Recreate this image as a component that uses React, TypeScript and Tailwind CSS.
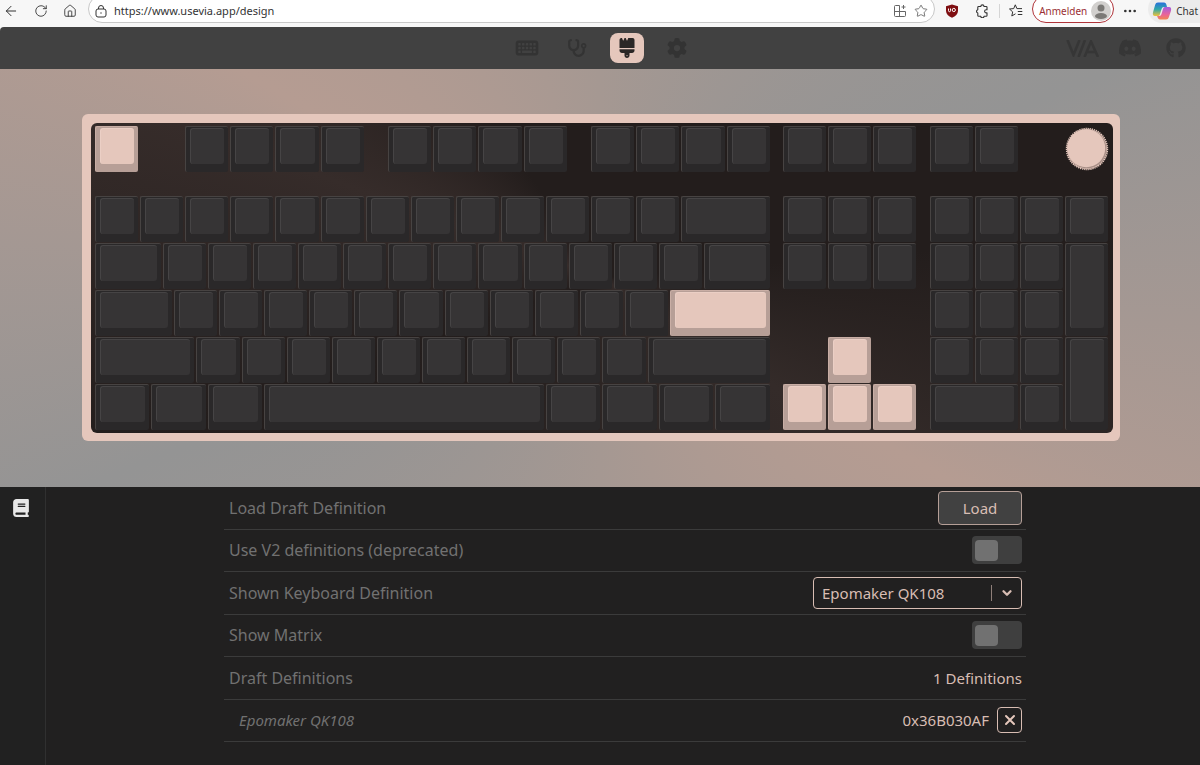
import React, { useState } from 'react';
import { ArrowLeft, RotateCw, House, Star, Ellipsis, ChevronDown } from 'lucide-react';
import { FaKeyboard, FaStethoscope, FaBrush, FaGear, FaDiscord, FaGithub, FaBook } from 'react-icons/fa6';

interface KeyConfig {
  x: number;
  row: number;
  w?: number;
  h?: number;
  accent?: boolean;
}

const run = (row: number, x: number, count: number, w = 1): KeyConfig[] =>
  Array.from({ length: count }, (_, i) => ({ row, x: x + i * w, w }));

// Positions are in key units, row 2 is the half-height gap below the function row
const KEYS: KeyConfig[] = [
  { row: 1, x: 0, accent: true },
  ...run(1, 2, 4),
  ...run(1, 6.5, 4),
  ...run(1, 11, 4),
  ...run(1, 15.25, 3),
  ...run(1, 18.5, 2),

  ...run(3, 0, 13),
  { row: 3, x: 13, w: 2 },
  ...run(3, 15.25, 3),
  ...run(3, 18.5, 4),

  { row: 4, x: 0, w: 1.5 },
  ...run(4, 1.5, 12),
  { row: 4, x: 13.5, w: 1.5 },
  ...run(4, 15.25, 3),
  ...run(4, 18.5, 3),
  { row: 4, x: 21.5, h: 2 },

  { row: 5, x: 0, w: 1.75 },
  ...run(5, 1.75, 11),
  { row: 5, x: 12.75, w: 2.25, accent: true },
  ...run(5, 18.5, 3),

  { row: 6, x: 0, w: 2.25 },
  ...run(6, 2.25, 10),
  { row: 6, x: 12.25, w: 2.75 },
  { row: 6, x: 16.25, accent: true },
  ...run(6, 18.5, 3),
  { row: 6, x: 21.5, h: 2 },

  ...run(7, 0, 3, 1.25),
  { row: 7, x: 3.75, w: 6.25 },
  ...run(7, 10, 4, 1.25),
  { row: 7, x: 15.25, accent: true },
  { row: 7, x: 16.25, accent: true },
  { row: 7, x: 17.25, accent: true },
  { row: 7, x: 18.5, w: 2 },
  { row: 7, x: 20.5 }
];

const gridPlace = ({ x, row, w = 1, h = 1 }: KeyConfig) => ({
  gridColumn: `${x * 4 + 1} / span ${w * 4}`,
  gridRow: `${row} / span ${h}`
});

function Key({ config }: { config: KeyConfig }) {
  return (
    <div className="flex pr-0.5 pb-px" style={gridPlace(config)}>
      <div
        className={`flex flex-1 rounded-xs border-t border-l px-1 pt-px pb-2 ${
          config.accent ? 'border-[#c9aea5] bg-[#b79f97]' : 'border-[#474342] bg-[#2a2829]'
        }`}
      >
        <div
          className={`flex-1 rounded-[3px] border-t border-l ${
            config.accent ? 'border-[#ebcfc5] bg-[#e5c7bc]' : 'border-[#464445] bg-[#363435]'
          }`}
        />
      </div>
    </div>
  );
}

function Knob() {
  return (
    <div className="flex items-center justify-center pb-px" style={gridPlace({ row: 1, x: 21.5 })}>
      <svg viewBox="0 0 44 44" className="h-11 w-11 shrink-0">
        <circle cx="22" cy="22" r="20" fill="#e5c7bc" />
        <circle cx="22" cy="22" r="20.5" fill="none" stroke="#e5c7bc" strokeWidth="1.400" strokeDasharray="1.300 0.800" />
        <circle cx="22" cy="22" r="19.5" fill="#a88f87" />
        <circle cx="21.2" cy="21.2" r="19" fill="#e5c7bc" />
      </svg>
    </div>
  );
}

function LockIcon() {
  return (
    <svg viewBox="0 0 12 13" className="h-[13px] w-3" fill="none" stroke="currentColor">
      <rect x="1" y="4" width="10" height="8" rx="2" />
      <path d="M3.500 4V3a2.500 2.500 0 0 1 5 0v1" />
      <circle cx="6" cy="8" r="0.700" fill="currentColor" stroke="none" />
    </svg>
  );
}

function AppsIcon() {
  return (
    <svg viewBox="0 0 14 14" className="h-3.5 w-3.5" fill="none" stroke="currentColor">
      <path d="M6.500 1.500h-4a1 1 0 0 0-1 1v9a1 1 0 0 0 1 1h9a1 1 0 0 0 1-1V7.500h-11M6.500 1.500v11M10.500 1v4M8.500 3h4" />
    </svg>
  );
}

function ShieldIcon() {
  return (
    <svg viewBox="0 0 14 14" className="h-3.5 w-3.5">
      <path d="M7 0.500 13 2.200V7c0 3-2.500 5.300-6 6.800C3.500 12.300 1 10 1 7V2.200z" fill="#7f0f12" />
      <path d="M3.500 4.500v2.200a1 1 0 0 0 2 0V4.500" fill="none" stroke="#fff" />
      <circle cx="8.800" cy="6" r="1.600" fill="none" stroke="#fff" />
    </svg>
  );
}

function ExtensionsIcon() {
  return (
    <svg viewBox="0 0 14 14" className="h-3.5 w-3.5" fill="none" stroke="currentColor" strokeWidth="1.100" strokeLinejoin="round">
      <path d="M5.800 2.500a1.600 1.600 0 0 1 3.200 0h2.200a.8.8 0 0 1 .8.800v2.400h-.8a1.600 1.600 0 0 0 0 3.200h.8v2.600a.8.800 0 0 1-.8.800H9a1.600 1.600 0 0 1-3.200 0H3.600a.8.800 0 0 1-.8-.8V9a1.700 1.700 0 0 1 0-3.300V3.300a.8.800 0 0 1 .8-.8z" />
    </svg>
  );
}

function FavoritesIcon() {
  return (
    <svg viewBox="0 0 16 16" className="h-4 w-4" fill="none" stroke="currentColor" strokeLinejoin="round">
      <path d="M7.500 10.800 3.800 13l.9-4.100L1.500 6l4.200-.4L7.300 1.800l1.600 3.800H14M9.800 8.500h4.500M9.800 11.500h4.500" />
    </svg>
  );
}

function CopilotIcon() {
  return (
    <svg viewBox="0 0 20 20" className="h-5 w-5">
      <defs>
        <linearGradient id="cpLeft" x1="0" y1="0" x2="0" y2="1">
          <stop offset="0" stopColor="#2870dc" />
          <stop offset="0.500" stopColor="#2fa8a8" />
          <stop offset="1" stopColor="#f0c13a" />
        </linearGradient>
        <linearGradient id="cpRight" x1="0" y1="0" x2="0" y2="1">
          <stop offset="0" stopColor="#a45be0" />
          <stop offset="0.600" stopColor="#e8649a" />
          <stop offset="1" stopColor="#f2854f" />
        </linearGradient>
      </defs>
      <path d="M6 1.500h6c1.500 0 2 1 2.500 2.500L15 6h-3c-1.500 0-2 .7-2.400 2L8 13c-.5 1.400-1 2-2.500 2H3C.8 15 .5 13 1.100 11l2-7C3.600 2.300 4.500 1.500 6 1.500z" fill="url(#cpLeft)" />
      <path d="M14 18.500H8c-1.500 0-2-1-2.500-2.500L5 15h2c1.500 0 2.100-.7 2.500-2L11 8c.5-1.400 1.200-2 2.500-2H17c2.200 0 2.500 2 1.900 4l-2 6c-.5 1.700-1.400 2.500-2.900 2.500z" fill="url(#cpRight)" />
    </svg>
  );
}

function ViaLogo() {
  return (
    <svg viewBox="0 0 34 17" className="h-[17px] w-[34px]" fill="none" stroke="currentColor" strokeWidth="2.600">
      <path d="M1.500 0 7.500 15 13.500 0M12.500 17 19 0M18.500 17 25 1.500 32 17M21.500 12h8" />
    </svg>
  );
}

function BrowserBar() {
  return (
    <header className="flex h-[27px] items-start justify-between overflow-hidden bg-[#f7f7f7] text-[#333]">
      <div className="flex h-[22px] flex-1 items-center">
        <div className="flex w-[88px] items-center gap-[15px] pl-[3px]">
          <button aria-label="Back"><ArrowLeft className="h-4 w-4" strokeWidth={1.5} /></button>
          <button aria-label="Reload"><RotateCw className="h-3.5 w-3.5" strokeWidth={1.5} /></button>
          <button aria-label="Home"><House className="h-3.5 w-3.5" strokeWidth={1.5} /></button>
        </div>
        <div className="-mt-1 flex h-7 flex-1 items-center gap-[7px] rounded-full border border-[#c8c8c8] bg-white px-1.5 pt-1">
          <LockIcon />
          <input
            aria-label="Address"
            defaultValue="https://www.usevia.app/design"
            className="min-w-0 flex-1 text-[11px] outline-none"
          />
          <button aria-label="Apps" className="text-[#666]"><AppsIcon /></button>
          <button aria-label="Add to favorites" className="text-[#666]"><Star className="h-3.5 w-3.5" strokeWidth={1.5} /></button>
        </div>
      </div>
      <div className="flex h-[22px] items-center pl-2.5">
        <button aria-label="Blocker"><ShieldIcon /></button>
        <button aria-label="Extensions" className="ml-4"><ExtensionsIcon /></button>
        <span className="mr-2 ml-2.5 h-3.5 w-px bg-[#d5d5d5]" />
        <button aria-label="Favorites"><FavoritesIcon /></button>
        <button className="-mt-1 ml-2 flex h-7 items-center gap-1 rounded-full border border-[#b0343a] bg-white pt-1 pr-0.5 pl-1.5 text-[10px] text-[#9a2f34]">
          Anmelden
          <svg viewBox="0 0 20 20" className="h-5 w-5">
            <circle cx="10" cy="10" r="10" fill="#d2d0ce" />
            <circle cx="10" cy="7" r="3.500" fill="#7b7976" />
            <ellipse cx="10" cy="15" rx="6" ry="3" fill="#7b7976" />
          </svg>
        </button>
        <button aria-label="More" className="ml-2"><Ellipsis className="h-4 w-4" strokeWidth={2} /></button>
        <button className="-mt-1 ml-2.5 flex h-7 items-center gap-1 rounded-l-full bg-[#ececec] pt-1 pr-0.5 pl-1 text-[10px]">
          <CopilotIcon />
          Chat
        </button>
      </div>
    </header>
  );
}

function NavBar() {
  return (
    <nav className="grid h-[42px] grid-cols-[1fr_auto_1fr] items-center rounded-tl-sm bg-[#414141] pl-1 text-[#333]">
      <span />
      <div className="flex items-center gap-4">
        <a href="#configure" aria-label="Configure" className="flex w-[34px] justify-center"><FaKeyboard className="h-5 w-6" /></a>
        <a href="#test" aria-label="Key tester" className="flex w-[34px] justify-center"><FaStethoscope className="h-5 w-5" /></a>
        <a href="#design" aria-label="Design" className="flex h-[30px] w-[34px] items-center justify-center rounded-lg bg-[#e5c7bc] text-[#2b2726]">
          <FaBrush className="h-5 w-5" />
        </a>
        <a href="#settings" aria-label="Settings" className="flex w-[34px] justify-center"><FaGear className="h-5 w-5" /></a>
      </div>
      <div className="flex items-center justify-end gap-[18px] pr-3.5 text-[#363636]">
        <a href="#via" aria-label="VIA"><ViaLogo /></a>
        <a href="#discord" aria-label="Discord"><FaDiscord className="h-6 w-6" /></a>
        <a href="#github" aria-label="GitHub" className="pl-1.5"><FaGithub className="h-5 w-5" /></a>
      </div>
    </nav>
  );
}

function Keyboard() {
  return (
    <div className="w-full max-w-[1038px] rounded-md bg-[#e5c7bc] pt-[9px] pr-[7px] pb-2 pl-[9px]">
      <div className="rounded-md bg-[conic-gradient(#231d1c_85deg,#342b29_122deg,#231d1c_250deg,#362c2a_290deg,#231d1c_325deg)] pt-[3px] pr-[3px] pb-0.5 pl-1">
        <div className="grid grid-cols-[repeat(90,minmax(0,1fr))] grid-rows-[47px_23px_47px_47px_47px_47px_47px]">
          {KEYS.map(key => <Key key={`${key.row}-${key.x}`} config={key} />)}
          <Knob />
        </div>
      </div>
    </div>
  );
}

function Toggle({ id }: { id: string }) {
  const [checked, setChecked] = useState(false);

  return (
    <span className="relative flex h-7 w-[50px]">
      <input
        id={id}
        type="checkbox"
        className="absolute inset-0 cursor-pointer opacity-0"
        checked={checked}
        onChange={() => setChecked(!checked)}
      />
      <span className={`pointer-events-none flex flex-1 items-center rounded-sm bg-[#3f3f3f] px-[3px] ${checked ? 'justify-end' : ''}`}>
        <span className={`h-[21px] w-[23px] rounded-sm ${checked ? 'bg-[#e5c7bc]' : 'bg-[#717171]'}`} />
      </span>
    </span>
  );
}

interface RowProps {
  label: string;
  htmlFor?: string;
  nested?: boolean;
  children: React.ReactNode;
}

function Row({ label, htmlFor, nested, children }: RowProps) {
  const Label = htmlFor ? 'label' : 'span';

  return (
    <div className="flex items-center justify-between border-b border-[#3b3b3b] pr-1 pl-[5px] text-[#717171]">
      <Label htmlFor={htmlFor} className={nested ? 'pl-2.5 text-[15px] italic' : 'text-base'}>{label}</Label>
      <div className="flex items-center gap-2 text-[15px] text-[#d8bdb3]">{children}</div>
    </div>
  );
}

export default function App() {
  return (
    <div className="flex min-h-screen flex-col bg-[#f7f7f7] font-['Noto_Sans','Open_Sans',sans-serif]">
      <BrowserBar />
      <NavBar />
      <section className="flex justify-center bg-[conic-gradient(#a59892_0deg,#949494_68deg,#b59c92_120deg,#a59892_180deg,#949494_248deg,#b59c92_300deg,#a59892_360deg)] pt-[45px] pr-20 pb-[46px] pl-[82px]">
        <Keyboard />
      </section>
      <main className="flex flex-1 bg-[#212020]">
        <aside className="w-[46px] border-r border-[#303030] bg-[#212121] pt-3 pl-[13px]">
          <button aria-label="Design" className="text-[#e8e8e8]"><FaBook className="h-[18px] w-4" /></button>
        </aside>
        <div className="flex flex-1 justify-center pl-1">
          <div className="grid h-[255px] w-full max-w-[802px] grid-rows-6">
            <Row label="Load Draft Definition">
              <button className="h-[34px] w-[84px] rounded-sm border border-[#b59f97] bg-[#414141]">Load</button>
            </Row>
            <Row label="Use V2 definitions (deprecated)" htmlFor="use-v2"><Toggle id="use-v2" /></Row>
            <Row label="Shown Keyboard Definition" htmlFor="definition">
              <div className="relative">
                <select id="definition" className="block h-8 w-[209px] appearance-none rounded-sm border border-[#d8bdb3] bg-[#212020] pl-2">
                  <option>Epomaker QK108</option>
                </select>
                <span className="pointer-events-none absolute inset-y-2 right-2 flex items-center border-l border-[#8f7f79] pl-2">
                  <ChevronDown className="h-3.5 w-3.5" strokeWidth={4} />
                </span>
              </div>
            </Row>
            <Row label="Show Matrix" htmlFor="show-matrix"><Toggle id="show-matrix" /></Row>
            <Row label="Draft Definitions">1 Definitions</Row>
            <Row label="Epomaker QK108" nested>
              0x36B030AF
              <button aria-label="Remove definition" className="flex h-[26px] w-[25px] items-center justify-center rounded-sm border border-[#d8bdb3]">
                <svg viewBox="0 0 12 12" className="h-3 w-3" stroke="#e5c7bc" strokeWidth="2" strokeLinecap="round">
                  <path d="M2 2 10 10M10 2 2 10" />
                </svg>
              </button>
            </Row>
          </div>
        </div>
      </main>
    </div>
  );
}
